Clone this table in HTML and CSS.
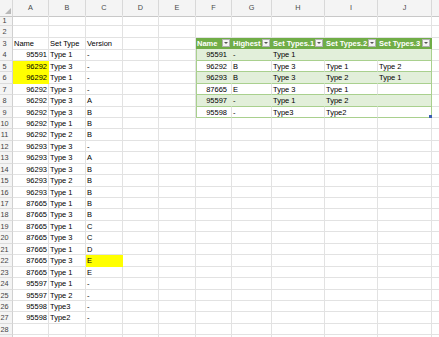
FILE: index.html
```html
<!DOCTYPE html>
<html>
<head>
<meta charset="utf-8">
<link rel="stylesheet" href="styles.css">
</head>
<body>
<div class="sheet">
  <div class="colhdr">
    <span class="corner"></span><span>A</span><span>B</span><span>C</span><span>D</span><span>E</span><span>F</span><span>G</span><span>H</span><span>I</span><span>J</span><span></span>
  </div>
  <div class="row"><span class="rn">1</span><span></span><span></span><span></span><span></span><span></span><span></span><span></span><span></span><span></span><span></span><span></span></div>
  <div class="row"><span class="rn">2</span><span></span><span></span><span></span><span></span><span></span><span></span><span></span><span></span><span></span><span></span><span></span></div>
  <div class="row"><span class="rn">3</span><span>Name</span><span>Set Type</span><span>Version</span><span></span><span></span><span class="th tl">Name<b class="fb"></b></span><span class="th">Highest<b class="fb"></b></span><span class="th">Set Types.1<b class="fb"></b></span><span class="th">Set Types.2<b class="fb"></b></span><span class="th tr">Set Types.3<b class="fb"></b></span><span></span></div>
  <div class="row"><span class="rn">4</span><span class="num">95591</span><span>Type 1</span><span>-</span><span></span><span></span><span class="tg tl tn">95591</span><span class="tg">-</span><span class="tg">Type 1</span><span class="tg"></span><span class="tg tr"></span><span></span></div>
  <div class="row"><span class="rn">5</span><span class="num hl">96292</span><span>Type 3</span><span>-</span><span></span><span></span><span class="tw tl tn">96292</span><span class="tw">B</span><span class="tw">Type 3</span><span class="tw">Type 1</span><span class="tw tr">Type 2</span><span></span></div>
  <div class="row"><span class="rn">6</span><span class="num hl">96292</span><span>Type 1</span><span>-</span><span></span><span></span><span class="tg tl tn">96293</span><span class="tg">B</span><span class="tg">Type 3</span><span class="tg">Type 2</span><span class="tg tr">Type 1</span><span></span></div>
  <div class="row"><span class="rn">7</span><span class="num">96292</span><span>Type 3</span><span>-</span><span></span><span></span><span class="tw tl tn">87665</span><span class="tw">E</span><span class="tw">Type 3</span><span class="tw">Type 1</span><span class="tw tr"></span><span></span></div>
  <div class="row"><span class="rn">8</span><span class="num">96292</span><span>Type 3</span><span>A</span><span></span><span></span><span class="tg tl tn">95597</span><span class="tg">-</span><span class="tg">Type 1</span><span class="tg">Type 2</span><span class="tg tr"></span><span></span></div>
  <div class="row"><span class="rn">9</span><span class="num">96292</span><span>Type 3</span><span>B</span><span></span><span></span><span class="tw tl tn">95598</span><span class="tw">-</span><span class="tw">Type3</span><span class="tw">Type2</span><span class="tw tr handle"></span><span></span></div>
  <div class="row"><span class="rn">10</span><span class="num">96292</span><span>Type 1</span><span>B</span><span></span><span></span><span></span><span></span><span></span><span></span><span></span><span></span></div>
  <div class="row"><span class="rn">11</span><span class="num">96292</span><span>Type 2</span><span>B</span><span></span><span></span><span></span><span></span><span></span><span></span><span></span><span></span></div>
  <div class="row"><span class="rn">12</span><span class="num">96293</span><span>Type 3</span><span>-</span><span></span><span></span><span></span><span></span><span></span><span></span><span></span><span></span></div>
  <div class="row"><span class="rn">13</span><span class="num">96293</span><span>Type 3</span><span>A</span><span></span><span></span><span></span><span></span><span></span><span></span><span></span><span></span></div>
  <div class="row"><span class="rn">14</span><span class="num">96293</span><span>Type 3</span><span>B</span><span></span><span></span><span></span><span></span><span></span><span></span><span></span><span></span></div>
  <div class="row"><span class="rn">15</span><span class="num">96293</span><span>Type 2</span><span>B</span><span></span><span></span><span></span><span></span><span></span><span></span><span></span><span></span></div>
  <div class="row"><span class="rn">16</span><span class="num">96293</span><span>Type 1</span><span>B</span><span></span><span></span><span></span><span></span><span></span><span></span><span></span><span></span></div>
  <div class="row"><span class="rn">17</span><span class="num">87665</span><span>Type 1</span><span>B</span><span></span><span></span><span></span><span></span><span></span><span></span><span></span><span></span></div>
  <div class="row"><span class="rn">18</span><span class="num">87665</span><span>Type 3</span><span>B</span><span></span><span></span><span></span><span></span><span></span><span></span><span></span><span></span></div>
  <div class="row"><span class="rn">19</span><span class="num">87665</span><span>Type 1</span><span>C</span><span></span><span></span><span></span><span></span><span></span><span></span><span></span><span></span></div>
  <div class="row"><span class="rn">20</span><span class="num">87665</span><span>Type 3</span><span>C</span><span></span><span></span><span></span><span></span><span></span><span></span><span></span><span></span></div>
  <div class="row"><span class="rn">21</span><span class="num">87665</span><span>Type 1</span><span>D</span><span></span><span></span><span></span><span></span><span></span><span></span><span></span><span></span></div>
  <div class="row"><span class="rn">22</span><span class="num">87665</span><span>Type 3</span><span class="hl">E</span><span></span><span></span><span></span><span></span><span></span><span></span><span></span><span></span></div>
  <div class="row"><span class="rn">23</span><span class="num">87665</span><span>Type 1</span><span>E</span><span></span><span></span><span></span><span></span><span></span><span></span><span></span><span></span></div>
  <div class="row"><span class="rn">24</span><span class="num">95597</span><span>Type 1</span><span>-</span><span></span><span></span><span></span><span></span><span></span><span></span><span></span><span></span></div>
  <div class="row"><span class="rn">25</span><span class="num">95597</span><span>Type 2</span><span>-</span><span></span><span></span><span></span><span></span><span></span><span></span><span></span><span></span></div>
  <div class="row"><span class="rn">26</span><span class="num">95598</span><span>Type3</span><span>-</span><span></span><span></span><span></span><span></span><span></span><span></span><span></span><span></span></div>
  <div class="row"><span class="rn">27</span><span class="num">95598</span><span>Type2</span><span>-</span><span></span><span></span><span></span><span></span><span></span><span></span><span></span><span></span></div>
  <div class="row"><span class="rn">28</span><span></span><span></span><span></span><span></span><span></span><span></span><span></span><span></span><span></span><span></span><span></span></div>
  <div class="row"><span class="rn"></span><span></span><span></span><span></span><span></span><span></span><span></span><span></span><span></span><span></span><span></span><span></span></div>
</div>
</body>
</html>
```

FILE: styles.css
```css
html, body {
  margin: 0;
  padding: 0;
  background: #ffffff;
  overflow: hidden;
}
body {
  font-family: "Liberation Sans", Arial, sans-serif;
  font-size: 7.5px;
  color: #000;
}
.sheet {
  width: 439px;
  height: 337px;
  overflow: hidden;
}
.colhdr, .row {
  display: grid;
  grid-template-columns: 13px 36px 37px 37px 36px 37px 36px 40px 53px 53px 54px 40px;
}
.colhdr {
  height: 15px;
}
.colhdr > span {
  box-sizing: border-box;
  background: #f4f4f4;
  border-right: 1px solid #d8d8d8;
  border-bottom: 1px solid #c8c8c8;
  text-align: center;
  line-height: 16px;
  font-size: 7.3px;
  color: #4a4a4a;
}
.colhdr > .corner {
  position: relative;
}
.corner::after {
  content: "";
  position: absolute;
  right: 1px;
  bottom: 2px;
  border-style: solid;
  border-width: 0 0 6px 6px;
  border-color: transparent transparent #b8b8b8 transparent;
}
.row {
  height: 11.44px;
}
.row > span {
  box-sizing: border-box;
  border-right: 1px solid #e2e2e2;
  border-bottom: 1px solid #e2e2e2;
  line-height: 11px;
  padding: 0 1px;
  white-space: nowrap;
  overflow: hidden;
}
.row > .rn {
  background: #f4f4f4;
  border-right-color: #d0d0d0;
  border-bottom-color: #dcdcdc;
  color: #444;
  font-size: 7.3px;
  text-align: center;
  padding: 0 3px 0 0;
}
.row > .num {
  text-align: right;
}
.row > .hl {
  background: #ffff00;
  border-color: #ffff00;
}
.row > .th {
  display: flex;
  align-items: center;
  justify-content: space-between;
  background: #70ad47;
  color: #ffffff;
  font-weight: bold;
  border-right-color: #70ad47;
  border-bottom-color: #70ad47;
  padding: 0 1px 0 1px;
  overflow: visible;
}
.fb {
  position: relative;
  flex: none;
  box-sizing: border-box;
  width: 8px;
  height: 8px;
  background: #f4f4f4;
  border: 1px solid #b0b0b0;
}
.fb::after {
  content: "";
  position: absolute;
  left: 1px;
  top: 2px;
  border-style: solid;
  border-width: 2px 2px 0 2px;
  border-color: #555 transparent transparent transparent;
}
.row > .tg {
  background: #e2efda;
  border-right-color: #e2efda;
  border-bottom-color: #a9d08e;
}
.row > .tw {
  border-bottom-color: #a9d08e;
}
.row > .tn {
  text-align: right;
  padding-right: 4px;
}
.row > .tl {
  box-shadow: inset 1px 0 0 #a9d08e;
}
.row > .th.tl {
  box-shadow: none;
}
.row > .tr {
  border-right-color: #a9d08e;
}
.row > .th.tr {
  border-right-color: #70ad47;
}
.row > .handle {
  position: relative;
  overflow: visible;
}
.handle::after {
  content: "";
  position: absolute;
  right: -1px;
  bottom: -1px;
  width: 3px;
  height: 3px;
  background: #3a5fb0;
}
```
